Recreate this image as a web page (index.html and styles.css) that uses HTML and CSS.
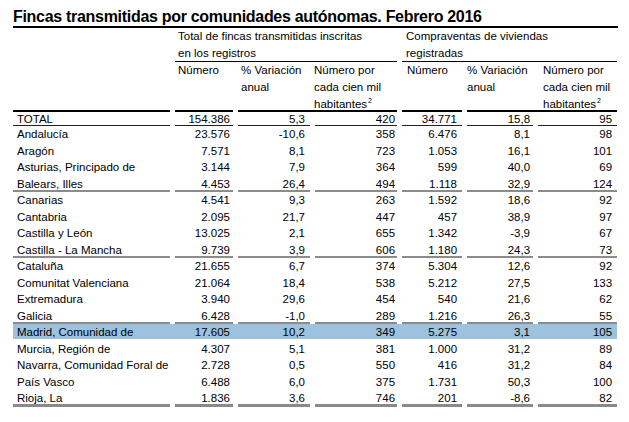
FILE: index.html
```html
<!DOCTYPE html>
<html lang="es">
<head>
<meta charset="utf-8">
<title>Fincas transmitidas por comunidades autónomas</title>
<link rel="stylesheet" href="styles.css">
</head>
<body>
<h1 class="title">Fincas transmitidas por comunidades autónomas. Febrero 2016</h1>
<table class="tbl">
<colgroup>
<col class="w1"><col class="w2"><col class="w3"><col class="w4"><col class="w5"><col class="w6"><col class="w7">
</colgroup>
<thead>
<tr>
<th class="corner" rowspan="2"></th>
<th class="grp g1" colspan="3"><div class="hd1">Total de fincas transmitidas inscritas<br>en los registros</div></th>
<th class="grp g2" colspan="3"><div class="hd1">Compraventas de viviendas<br>registradas</div></th>
</tr>
<tr class="sub">
<th class="s2"><div class="hd2">Número</div></th>
<th class="s3"><div class="hd2">% Variación<br>anual</div></th>
<th class="s4 join"><div class="hd2">Número por<br>cada cien mil<br>habitantes<sup class="sup">2</sup></div></th>
<th class="s5"><div class="hd2">Número</div></th>
<th class="s6"><div class="hd2">% Variación<br>anual</div></th>
<th class="s7 join"><div class="hd2">Número por<br>cada cien mil<br>habitantes<sup class="sup">2</sup></div></th>
</tr>
</thead>
<tbody>
<tr class="total"><td>TOTAL</td><td>154.386</td><td>5,3</td><td>420</td><td>34.771</td><td>15,8</td><td>95</td></tr>
<tr><td>Andalucía</td><td>23.576</td><td>-10,6</td><td>358</td><td>6.476</td><td>8,1</td><td>98</td></tr>
<tr><td>Aragón</td><td>7.571</td><td>8,1</td><td>723</td><td>1.053</td><td>16,1</td><td>101</td></tr>
<tr><td>Asturias, Principado de</td><td>3.144</td><td>7,9</td><td>364</td><td>599</td><td>40,0</td><td>69</td></tr>
<tr class="sep"><td>Balears, Illes</td><td>4.453</td><td>26,4</td><td>494</td><td>1.118</td><td>32,9</td><td>124</td></tr>
<tr><td>Canarias</td><td>4.541</td><td>9,3</td><td>263</td><td>1.592</td><td>18,6</td><td>92</td></tr>
<tr><td>Cantabria</td><td>2.095</td><td>21,7</td><td>447</td><td>457</td><td>38,9</td><td>97</td></tr>
<tr><td>Castilla y León</td><td>13.025</td><td>2,1</td><td>655</td><td>1.342</td><td>-3,9</td><td>67</td></tr>
<tr class="sep"><td>Castilla - La Mancha</td><td>9.739</td><td>3,9</td><td>606</td><td>1.180</td><td>24,3</td><td>73</td></tr>
<tr><td>Cataluña</td><td>21.655</td><td>6,7</td><td>374</td><td>5.304</td><td>12,6</td><td>92</td></tr>
<tr><td>Comunitat Valenciana</td><td>21.064</td><td>18,4</td><td>538</td><td>5.212</td><td>27,5</td><td>133</td></tr>
<tr><td>Extremadura</td><td>3.940</td><td>29,6</td><td>454</td><td>540</td><td>21,6</td><td>62</td></tr>
<tr class="sep"><td>Galicia</td><td>6.428</td><td>-1,0</td><td>289</td><td>1.216</td><td>26,3</td><td>55</td></tr>
<tr class="hl"><td>Madrid, Comunidad de</td><td>17.605</td><td>10,2</td><td>349</td><td>5.275</td><td>3,1</td><td>105</td></tr>
<tr><td>Murcia, Región de</td><td>4.307</td><td>5,1</td><td>381</td><td>1.000</td><td>31,2</td><td>89</td></tr>
<tr><td>Navarra, Comunidad Foral de</td><td>2.728</td><td>0,5</td><td>550</td><td>416</td><td>31,2</td><td>84</td></tr>
<tr><td>País Vasco</td><td>6.488</td><td>6,0</td><td>375</td><td>1.731</td><td>50,3</td><td>100</td></tr>
<tr class="sep last"><td>Rioja, La</td><td>1.836</td><td>3,6</td><td>746</td><td>201</td><td>-8,6</td><td>82</td></tr>
</tbody>
</table>
</body>
</html>
```

FILE: styles.css
```css
body {
  margin: 8px;
  font-family: "Liberation Sans", Arial, sans-serif;
  font-size: 11.5px;
  color: #000;
  background: #fff;
}

.title {
  margin: 0 0 0 5px;
  width: 605px;
  font-size: 16px;
  line-height: 18px;
  font-weight: bold;
  letter-spacing: -0.3px;
  border-bottom: 2px solid #000;
}

.tbl {
  border-collapse: collapse;
  border-spacing: 0;
  table-layout: fixed;
  width: 609px;
}

.w1 { width: 162px; }
.w2 { width: 63px; }
.w3 { width: 77px; }
.w4 { width: 87px; }
.w5 { width: 65px; }
.w6 { width: 71px; }
.w7 { width: 84px; }

.tbl th,
.tbl td {
  padding: 0;
  font-weight: normal;
  text-align: left;
  white-space: nowrap;
}

/* header */
.tbl thead th {
  vertical-align: top;
  background-repeat: no-repeat;
  background-position: right bottom;
}

.hd1 {
  height: 34px;
  line-height: 17px;
}

.hd2 {
  height: 50px;
  line-height: 17px;
}

.corner {
  background-image: linear-gradient(#000, #000);
  background-size: calc(100% - 5px) 2px;
}

.grp {
  background-image: linear-gradient(#000, #000);
  background-size: calc(100% - 5px) 1px;
}

.g1 { padding-left: 8px !important; }
.g2 { padding-left: 9px !important; }

.sub th {
  background-image: linear-gradient(#000, #000);
  background-size: calc(100% - 5px) 2px;
}

.sub th.join {
  background-size: 100% 2px;
}

.s2 { padding-left: 8px !important; }
.s3 { padding-left: 8px !important; }
.s4 { padding-left: 4px !important; }
.s5 { padding-left: 10px !important; }
.s6 { padding-left: 5px !important; }
.s7 { padding-left: 10px !important; }

.sup {
  font-size: 7px;
  line-height: 0;
  vertical-align: 5px;
  margin-left: 1px;
}

/* body rows */
.tbl tbody td {
  line-height: 16.5px;
  text-align: right;
  background-repeat: no-repeat;
}

.tbl tbody td:nth-child(1) { text-align: left; padding-left: 9px; }
.tbl tbody td:nth-child(2) { padding-right: 3px; }
.tbl tbody td:nth-child(3) { padding-right: 5px; }
.tbl tbody td:nth-child(4) { padding-right: 2px; }
.tbl tbody td:nth-child(5) { padding-right: 5px; }
.tbl tbody td:nth-child(6) { padding-right: 3px; }
.tbl tbody td:nth-child(7) { padding-right: 5px; }

.tbl tr.total td {
  line-height: 11px;
  padding-top: 2px;
  padding-bottom: 1px;
  background-image: linear-gradient(#222, #222);
  background-position: right bottom;
  background-size: calc(100% - 5px) 1px;
}

.tbl tr.sep td {
  background-image: linear-gradient(#8c8c8c, #8c8c8c);
  background-position: right bottom;
  background-size: calc(100% - 5px) 2px;
}

.tbl tr.sep.last td {
  background-image: linear-gradient(#8a8a8a, #8a8a8a);
  background-size: calc(100% - 5px) 3px;
}

.tbl tr.hl td {
  background-image: linear-gradient(#9cc2dd, #9cc2dd);
  background-position: right top;
  background-size: 100% 15px;
}

.tbl tr.hl td:first-child {
  background-size: calc(100% - 5px) 15px;
}
```
